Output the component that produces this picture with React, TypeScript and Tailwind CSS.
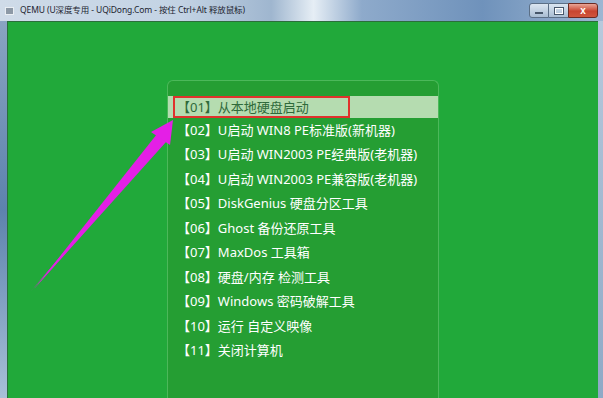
import React from "react";

const items = [
  "【01】从本地硬盘启动",
  "【02】U启动 WIN8 PE标准版(新机器)",
  "【03】U启动 WIN2003 PE经典版(老机器)",
  "【04】U启动 WIN2003 PE兼容版(老机器)",
  "【05】DiskGenius 硬盘分区工具",
  "【06】Ghost 备份还原工具",
  "【07】MaxDos 工具箱",
  "【08】硬盘/内存 检测工具",
  "【09】Windows 密码破解工具",
  "【10】运行 自定义映像",
  "【11】关闭计算机",
];

function TitleBar() {
  return (
    <div className="h-[21px] flex items-center bg-[linear-gradient(90deg,#cfdbe8_0%,#c3d3e4_30%,#9fb6cf_45%,#e6eef5_52%,#8eaacb_60%,#6f92bb_80%,#9db6d2_100%)] relative">
      <div className="ml-[5px] w-[9px] h-[8px] bg-[#8d99a6] border border-[#e9eef3]" />
      <span className="ml-[6px] text-[8.5px] text-[#1c2430] font-['Noto_Sans','Noto_Sans_CJK_SC',sans-serif] leading-none tracking-[-0.1px]">
        QEMU (U深度专用 - UQiDong.Com - 按住 Ctrl+Alt 释放鼠标)
      </span>
      <div className="ml-auto mr-[5px] flex items-start self-start mt-[3px]">
        <div className="w-[20px] h-[15px] border border-[#5b6f86] rounded-l-[3px] bg-[linear-gradient(180deg,#dbe6f1,#a9bdd3)] flex items-end justify-center pb-[3px]">
          <div className="w-[8px] h-[2px] bg-white border border-[#46566a]" />
        </div>
        <div className="w-[19px] h-[15px] border-y border-[#5b6f86] bg-[linear-gradient(180deg,#dbe6f1,#a9bdd3)] flex items-center justify-center">
          <div className="w-[8px] h-[6px] border-[1.5px] border-white outline outline-1 outline-[#46566a]" />
        </div>
        <div className="w-[30px] h-[15px] border border-[#6b2a22] rounded-r-[3px] bg-[linear-gradient(180deg,#e9a596,#c8452f_55%,#d0563d)] flex items-center justify-center text-white text-[10px] font-bold font-['Liberation_Sans',sans-serif] leading-none">
          x
        </div>
      </div>
    </div>
  );
}

function Arrow() {
  return (
    <svg className="absolute left-0 top-0 pointer-events-none" width="603" height="398">
      <polygon points="31,291 160,139 163,142" fill="#e41fe6" />
      <polygon points="34,289 157,134 166,142" fill="#e41fe6" />
      <polygon points="173,120 151,132 170,145" fill="#e41fe6" />
    </svg>
  );
}

export default function App() {
  return (
    <div className="w-[603px] h-[398px] flex flex-col overflow-hidden relative bg-[#a9bdd3]">
      <TitleBar />
      <div className="flex-1 flex">
        <div className="w-[7px] bg-[linear-gradient(180deg,#8aa4c2,#5d82ae_50%,#a8c0d8)]" />
        <div className="flex-1 bg-[#21a93a] border-t border-l border-[#2b6e3a] pl-[159px] pt-[58px] flex">
          <div className="w-[272px] bg-[#259e33] border border-[#4cb85a] border-b-0 rounded-t-[6px] pt-[15px] flex flex-col font-['Noto_Sans','Noto_Sans_CJK_SC',sans-serif]">
            {items.map((t, i) =>
              i === 0 ? (
                <div key={t} className="h-[22px] bg-[#b5dcb0] flex items-center pl-[9px] text-[13px] text-[#2f6a3b] leading-none relative">
                  <span>{t}</span>
                  <div className="absolute left-[5px] top-0 w-[177px] h-[22px] border-2 border-[#e0322c]" />
                </div>
              ) : (
                <div key={t} className="h-[24.5px] flex items-center pl-[9px] text-[13px] text-white leading-none">
                  {t}
                </div>
              )
            )}
          </div>
        </div>
        <div className="w-[5px] bg-[linear-gradient(180deg,#b7c9dc,#8ea9c6)]" />
      </div>
      <Arrow />
    </div>
  );
}
